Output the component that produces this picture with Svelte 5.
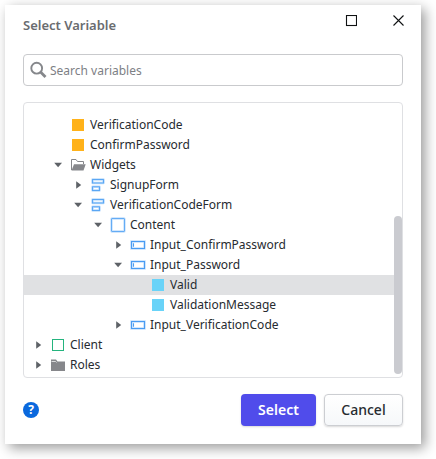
<script>
  const rows = [
    { level: 1, icon: 'local', label: 'VerificationCode' },
    { level: 1, icon: 'local', label: 'ConfirmPassword' },
    { level: 1, icon: 'open', label: 'Widgets', state: 'down' },
    { level: 2, icon: 'form', label: 'SignupForm', state: 'right' },
    { level: 2, icon: 'form', label: 'VerificationCodeForm', state: 'down' },
    { level: 3, icon: 'container', label: 'Content', state: 'down' },
    { level: 4, icon: 'input', label: 'Input_ConfirmPassword', state: 'right' },
    { level: 4, icon: 'input', label: 'Input_Password', state: 'down' },
    { level: 5, icon: 'attr', label: 'Valid' },
    { level: 5, icon: 'attr', label: 'ValidationMessage' },
    { level: 4, icon: 'input', label: 'Input_VerificationCode', state: 'right' },
    { level: 0, icon: 'client', label: 'Client', state: 'right' },
    { level: 0, icon: 'folder', label: 'Roles', state: 'right' }
  ];
  let selected = $state('Valid');
</script>

<div class="dialog">
  <header>
    <h1>Select Variable</h1>
    <div class="controls">
      <svg width="12" height="12"><rect x="1.5" y=".5" width="10" height="10" /></svg>
      <svg width="12" height="12"><path d="M1.5 .5 11.5 10.5M11.5 .5 1.5 10.5" /></svg>
    </div>
  </header>

  <label class="search">
    <svg width="18" height="18" viewBox="0 0 18 18">
      <circle cx="6.7" cy="7.2" r="5.4" fill="none" stroke="#85878b" stroke-width="1.9" />
      <path d="M10.8 11.3 15.5 16" stroke="#85878b" stroke-width="2.8" />
    </svg>
    <input placeholder="Search variables" />
  </label>

  <div class="tree">
    <div class="rows">
      {#each rows as row}
        <!-- svelte-ignore a11y_click_events_have_key_events, a11y_no_static_element_interactions -->
        <div
          class="row"
          class:selected={row.label === selected}
          style="padding-left: {row.level * 20 + 6}px"
          onclick={() => (selected = row.label)}
        >
          <svg class="arrow" width="16" height="16" viewBox="0 0 16 16">
            {#if row.state === 'right'}
              <path d="M6.2 4.2V11.8L11.2 8Z" />
            {:else if row.state === 'down'}
              <path d="M4.2 5.8H12L8.1 10.2Z" />
            {/if}
          </svg>
          <svg class="icon" width="16" height="16" viewBox="0 0 16 16">
            {#if row.icon === 'local'}
              <rect x="2" y="2" width="12" height="12" fill="#ffb21a" />
            {:else if row.icon === 'attr'}
              <rect x="2" y="2" width="12" height="12" fill="#69d3f8" />
            {:else if row.icon === 'client'}
              <rect x="2.5" y="2.5" width="11" height="11" fill="none" stroke="#24b47e" />
            {:else if row.icon === 'folder'}
              <path d="M1 2.5H6L7.5 4.5H15V14H1Z" fill="#86878b" />
              <path d="M1.5 4.5H5.5L6.5 5.5" fill="none" stroke="#fff" stroke-width=".7" />
            {:else if row.icon === 'open'}
              <path d="M1.5 13V2.5H6L7.5 4.5H13.5V7" fill="none" stroke="#86878b" />
              <path d="M4 7.3H15.7L13.5 13.6H1.5Z" fill="#86878b" />
            {:else if row.icon === 'container'}
              <g fill="none">
                <rect x="1.5" y="1.5" width="13" height="13" rx=".5" stroke="#c5e0fc" stroke-width="2.4" />
                <rect x="1.5" y="1.5" width="13" height="13" rx=".5" stroke="#64acf5" />
              </g>
            {:else if row.icon === 'form'}
              <g fill="none" stroke-linejoin="round">
                <path d="M2.5 2.5H13.5V6H2.5ZM2.5 9.7H9.5V13.5H2.5Z" stroke="#c0defc" stroke-width="2.4" />
                <path d="M2.5 2.5H13.5V6H2.5ZM2.5 9.7H9.5V13.5H2.5Z" stroke="#5ba7f4" stroke-width="1.1" />
              </g>
            {:else if row.icon === 'input'}
              <g fill="none">
                <path d="M1.5 4.5H14.5V11.5H1.5Z" stroke="#c5e0fc" stroke-width="2.4" />
                <path d="M1.5 4.5H14.5V11.5H1.5ZM3.5 6.3V9.7" stroke="#4a9cf2" stroke-width="1.1" />
              </g>
            {/if}
          </svg>
          <span>{row.label}</span>
        </div>
      {/each}
    </div>
    <div class="scroll"><div class="thumb"></div></div>
  </div>

  <footer>
    <span class="help">?</span>
    <button class="primary">Select</button>
    <button class="secondary">Cancel</button>
  </footer>
</div>

<style>
  :global(body) {
    display: flow-root;
    height: 459px;
    background: #fff;
    overflow: hidden;
  }
  * {
    box-sizing: border-box;
  }
  .dialog {
    display: flex;
    flex-direction: column;
    width: 416px;
    height: 439px;
    margin: 5px;
    padding: 0 18px 18px;
    background: #fff;
    box-shadow: 4px 4px 12px rgba(0, 0, 0, 0.4);
    font: 13px/20px 'Noto Sans', sans-serif;
    color: #272b30;
  }
  header {
    display: flex;
    justify-content: space-between;
    height: 49px;
    padding-top: 10px;
  }
  h1 {
    margin: 0;
    font-size: 13px;
    line-height: 20px;
    font-weight: 600;
    color: #6a6c70;
  }
  .controls {
    display: flex;
    gap: 35px;
    margin-right: -1px;
  }
  .controls svg {
    fill: none;
    stroke: #101213;
    stroke-width: 1.1;
  }
  .search {
    display: flex;
    align-items: center;
    height: 32px;
    padding-left: 6px;
    border: 1px solid #c9cacd;
    border-radius: 4px;
  }
  input {
    flex: 1;
    height: 22px;
    margin-left: 2px;
    padding: 1px 0 0;
    border: 0;
    outline: 0;
    background: none;
    font: inherit;
    font-size: 12px;
  }
  input::placeholder {
    color: #7d8085;
    opacity: 1;
  }
  .tree {
    display: flex;
    height: 276px;
    margin-top: 16px;
    border: 1px solid #dfe0e3;
    border-radius: 4px;
  }
  .rows {
    flex: 1;
    padding-top: 12px;
  }
  .row {
    display: flex;
    align-items: center;
    height: 20px;
    white-space: nowrap;
  }
  .row span {
    font-size: 12px;
  }
  .selected {
    background: #e0e1e3;
  }
  .arrow {
    fill: #5e6267;
    margin-right: 4px;
  }
  .icon {
    margin-right: 4px;
  }
  .scroll {
    width: 8px;
    padding-top: 113px;
  }
  .thumb {
    height: 158px;
    border-radius: 4px;
    background: #cacbd0;
  }
  footer {
    display: flex;
    align-items: center;
    height: 32px;
    margin-top: 16px;
  }
  .help {
    width: 16px;
    height: 16px;
    margin-right: auto;
    border-radius: 50%;
    background: #0a68dd;
    color: #fff;
    font-size: 12px;
    font-weight: 700;
    line-height: 16px;
    text-align: center;
  }
  button {
    height: 32px;
    padding: 0;
    border-radius: 4px;
    font: 600 14px/20px 'Noto Sans', sans-serif;
    box-shadow: 0 1px 2px rgba(0, 0, 0, 0.15);
  }
  .primary {
    width: 75px;
    margin-right: 8px;
    border: 0;
    background: #504ceb;
    color: #fff;
  }
  .secondary {
    width: 79px;
    border: 1px solid #ccced2;
    background: linear-gradient(#fff, #f6f8fa);
    color: #272b30;
    font-weight: 500;
  }
</style>
